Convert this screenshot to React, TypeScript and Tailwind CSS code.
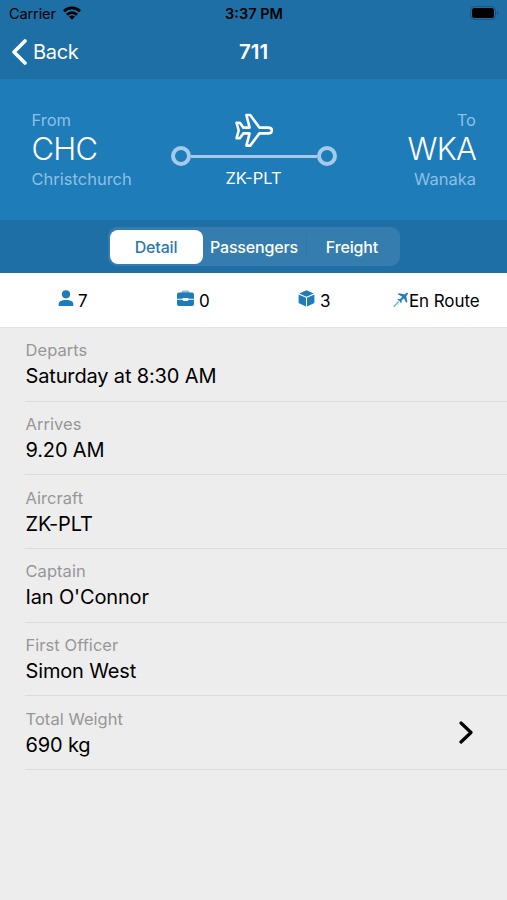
import type { ReactNode } from "react";

interface DetailRow {
    label: string;
    value: string;
    chevron?: boolean;
}

const rows: DetailRow[] = [
    { label: "Departs", value: "Saturday at 8:30 AM" },
    { label: "Arrives", value: "9.20 AM" },
    { label: "Aircraft", value: "ZK-PLT" },
    { label: "Captain", value: "Ian O'Connor" },
    { label: "First Officer", value: "Simon West" },
    { label: "Total Weight", value: "690 kg", chevron: true },
];

function StatusBar() {
    return (
        <div className="h-[27px] grid grid-cols-3 items-center pl-[9px] pr-[8px] text-black">
            <div className="flex items-center gap-[7px] text-[14.5px] tracking-[-0.1px]">
                <span>Carrier</span>
                <svg className="w-[18px] h-[14px] -mt-[2px]" viewBox="0 0 18 14" fill="none" stroke="currentColor" strokeWidth="2.8">
                    <path d="M1 5.2a11.4 11.4 0 0 1 16 0" />
                    <path d="M4 8.7a7 7 0 0 1 10 0" />
                    <path d="M9 13.8 6 10.8a4.2 4.2 0 0 1 6 0Z" fill="currentColor" stroke="none" />
                </svg>
            </div>
            <span className="text-center text-[14.5px] font-semibold">3:37 PM</span>
            <svg className="justify-self-end w-[29px] h-[14px] -mt-px" viewBox="0 0 29 14">
                <rect x="0.5" y="0.5" width="25" height="13" rx="4" fill="none" stroke="#18557f" />
                <rect x="2" y="2" width="22" height="10" rx="2.5" />
                <path d="M27 5v4q1.5-.5 1.5-2T27 5Z" fill="#18557f" />
            </svg>
        </div>
    );
}

function NavBar() {
    return (
        <div className="h-[52px] grid grid-cols-3 items-center pl-[12px] pr-[12px] text-white">
            <div className="flex items-center gap-[6px] text-[20px] tracking-[-0.3px]">
                <svg className="w-[15px] h-[26px] -mt-[2px]" viewBox="0 0 15 26" fill="none" stroke="currentColor" strokeWidth="3.6" strokeLinecap="round" strokeLinejoin="round">
                    <path d="M13 2 2 13l11 11" />
                </svg>
                <span className="-mt-[2px]">Back</span>
            </div>
            <span className="text-center text-[20.5px] font-semibold -mt-px">711</span>
        </div>
    );
}

function Airport({ label, code, city, right }: { label: string; code: string; city: string; right?: boolean }) {
    return (
        <div className={right ? "w-[120px] text-right" : "w-[120px] pl-[0.5px]"}>
            <div className="text-[16.5px] leading-[20px] text-[#8cc0e4]">{label}</div>
            <div className="text-[31px] leading-[38px] font-light tracking-[-0.8px] text-white">{code}</div>
            <div className="text-[16.5px] leading-[22px] text-[#8cc0e4]">{city}</div>
        </div>
    );
}

function RouteLine() {
    return (
        <div className="w-[166px] pt-[3px] flex flex-col items-center">
            <svg className="w-[38px] h-[33px] overflow-visible" viewBox="0 0 38 33" fill="none" stroke="white" strokeWidth="2.6" strokeLinejoin="round">
                <path d="M1.6 9.8h3.2l3.6 4.8h6.2L11.4 2h3.8l9.2 12.6H33c5.2 0 5.2 5.8 0 5.8h-8.6L15.2 32.6h-3.8l3.2-12.2H8.4l-3.6 4.8H1.6l2.1-7.7Z" />
            </svg>
            <div className="w-full h-[20px] flex items-center">
                <span className="size-[20px] rounded-full border-[4px] border-[#a6cbe8]" />
                <span className="flex-1 h-[3px] bg-[#a6cbe8]" />
                <span className="size-[20px] rounded-full border-[4px] border-[#a6cbe8]" />
            </div>
            <div className="mt-[1px] text-[16.5px] leading-[22px] text-white">ZK-PLT</div>
        </div>
    );
}

function Stat({ icon, children }: { icon: ReactNode; children: ReactNode }) {
    return (
        <div className="flex items-center text-[17px] tracking-[-0.1px] text-black">
            {icon}
            <span className="pt-[3px]">{children}</span>
        </div>
    );
}

export default function App() {
    return (
        <div className="w-full h-[900px] bg-[#ededed] font-['Inter',sans-serif] overflow-hidden">
            <header className="bg-[#1d6fa6]">
                <StatusBar />
                <NavBar />
            </header>

            <section className="h-[141px] bg-[#1e7cb9] flex justify-between pt-[31px] px-[31px]">
                <Airport label="From" code="CHC" city="Christchurch" />
                <RouteLine />
                <Airport label="To" code="WKA" city="Wanaka" right />
            </section>

            <div className="h-[53px] bg-[#1d6fa6] flex justify-center items-center">
                <div className="w-[292px] h-[39px] rounded-[9px] bg-[#347dae] p-[2px] flex items-center text-[16px] font-medium tracking-[-0.15px] text-white">
                    <div className="w-[93px] h-[34px] rounded-[8px] bg-white text-[#2c79ad] flex items-center justify-center">Detail</div>
                    <div className="w-[103px] text-center">Passengers</div>
                    <div className="flex-1 text-center border-l border-[#2e76a7]">Freight</div>
                </div>
            </div>

            <div className="h-[55px] bg-white border-b border-[#e3e3e3] flex items-center pl-[58px]">
                <div className="w-[118px]">
                    <Stat
                        icon={
                            <svg className="w-[16px] h-[17px] mr-[4px] mb-[4px]" viewBox="0 0 16 17" fill="#1e7cb9">
                                <circle cx="8" cy="4.3" r="4.1" />
                                <path d="M.7 16v-2.2c0-2.3 2.4-3.9 7.3-3.9s7.3 1.6 7.3 3.9V16Z" />
                            </svg>
                        }
                    >
                        7
                    </Stat>
                </div>
                <div className="w-[123px]">
                    <Stat
                        icon={
                            <svg className="w-[19px] h-[17px] mr-[4px] mb-[4px]" viewBox="0 0 19 17" fill="#1e7cb9">
                                <path d="M5 3 6.5.6h6L14 3Z" fill="#8fbddc" />
                                <path d="M3 2.6h13q2 0 2 2v4.2h-5.6v-.8H6.6v.8H1V4.6q0-2 2-2Z" />
                                <path d="M1 9.7h5.6q0 1.4 1.5 1.4h2.8q1.5 0 1.5-1.4H18V14q0 2-2 2H3q-2 0-2-2Z" />
                            </svg>
                        }
                    >
                        0
                    </Stat>
                </div>
                <div className="w-[94px]">
                    <Stat
                        icon={
                            <svg className="w-[17px] h-[17px] -ml-px mr-[5px] mb-[4px]" viewBox="0 0 17 17" fill="#1e7cb9">
                                <path d="m8.5.3 7.2 3.3-7.2 3.2-7.2-3.2Z" />
                                <path d="m.6 4.5 7.4 3.3v8.6L.6 13Z" />
                                <path d="m16.4 4.5-7.4 3.3v8.6l7.4-3.4Z" />
                            </svg>
                        }
                    >
                        3
                    </Stat>
                </div>
                <Stat
                    icon={
                        <svg className="w-[16px] h-[16px] mb-px" viewBox="0 0 16 16" fill="#1e7cb9">
                            <path d="M14.9.8c-1-.4-2 .3-3.3 1.7L5.8 1.3l-1 .9 4.5 2.6L7 7.2l-1.8-.3-.9.8 2.4 1.3 1.2 2.3.8-.8-.2-1.9 2.4-2.3 2.4 4.6 1-1.1-1.1-5.7C14.5 2.900 15.200 1.900 14.900.8Z" />
                            <path d="M.6 14.800 6 9.600" stroke="#5fb6dc" strokeWidth="1.3" />
                            <path d="M2.800 10.800 4.600 9.200M5 13 6.200 11.600" stroke="#a9dcef" strokeWidth="0.8" />
                        </svg>
                    }
                >
                    En Route
                </Stat>
            </div>

            <ul className="pl-[25px]">
                {rows.map((r) => (
                    <li key={r.label} className="h-[73.7px] border-b border-[#dcdcdc] flex items-center justify-between pr-[34px]">
                        <div className="pt-[2px] pl-[0.5px]">
                            <div className="text-[16.5px] leading-[22px] tracking-[0.05px] text-[#979797]">{r.label}</div>
                            <div className="text-[20px] leading-[30px] tracking-[-0.15px] text-black">{r.value}</div>
                        </div>
                        {r.chevron && (
                            <svg className="w-[14px] h-[23px]" viewBox="0 0 14 23" fill="none" stroke="black" strokeWidth="3.2" strokeLinecap="round" strokeLinejoin="round">
                                <path d="m2 2 10 9.5L2 21" />
                            </svg>
                        )}
                    </li>
                ))}
            </ul>
        </div>
    );
}
